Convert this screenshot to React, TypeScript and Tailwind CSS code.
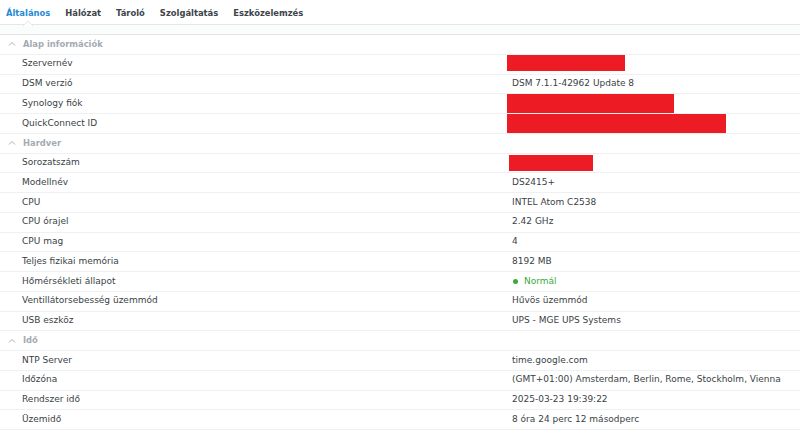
import React from 'react';

type Row = {
  label: string;
  value?: string;
  redact?: { w: number; h: number; ml: number; self: string };
  status?: boolean;
};

type Section = { title: string; rows: Row[] };

const sections: Section[] = [
  {
    title: 'Alap információk',
    rows: [
      { label: 'Szervernév', redact: { w: 118, h: 16, ml: -5, self: 'self-start' } },
      { label: 'DSM verzió', value: 'DSM 7.1.1-42962 Update 8' },
      { label: 'Synology fiók', redact: { w: 167, h: 19, ml: -5, self: 'self-start' } },
      { label: 'QuickConnect ID', redact: { w: 219, h: 19, ml: -5, self: 'self-start' } },
    ],
  },
  {
    title: 'Hardver',
    rows: [
      { label: 'Sorozatszám', redact: { w: 84, h: 16, ml: -3, self: 'self-center' } },
      { label: 'Modellnév', value: 'DS2415+' },
      { label: 'CPU', value: 'INTEL Atom C2538' },
      { label: 'CPU órajel', value: '2.42 GHz' },
      { label: 'CPU mag', value: '4' },
      { label: 'Teljes fizikai memória', value: '8192 MB' },
      { label: 'Hőmérsékleti állapot', value: 'Normál', status: true },
      { label: 'Ventillátorsebesség üzemmód', value: 'Hűvös üzemmód' },
      { label: 'USB eszköz', value: 'UPS - MGE UPS Systems' },
    ],
  },
  {
    title: 'Idő',
    rows: [
      { label: 'NTP Server', value: 'time.google.com' },
      { label: 'Időzóna', value: '(GMT+01:00) Amsterdam, Berlin, Rome, Stockholm, Vienna' },
      { label: 'Rendszer idő', value: '2025-03-23 19:39:22' },
      { label: 'Üzemidő', value: '8 óra 24 perc 12 másodperc' },
    ],
  },
];

const tabs = ['Általános', 'Hálózat', 'Tároló', 'Szolgáltatás', 'Eszközelemzés'];

function Chevron() {
  return (
    <svg width="8" height="6" viewBox="0 0 8 6" className="mr-[7px]">
      <path d="M1 4.5 L4 1.5 L7 4.5" fill="none" stroke="#a9afb5" strokeWidth="1" />
    </svg>
  );
}

export default function App() {
  return (
    <div
      className="w-[800px] h-[442px] bg-white overflow-hidden text-[#3a3f45]"
      style={{ fontFamily: '"DejaVu Sans", Verdana, sans-serif' }}
    >
      {/* Tabs */}
      <div className="relative h-[25px] flex items-center gap-[15px] pl-[6px] pt-[2px] border-b border-[#e3e5e8]">
        {tabs.map((t, i) => (
          <div
            key={t}
            className={`relative text-[8.4px] font-bold ${i === 0 ? 'text-[#1f8ad6]' : 'text-[#3c434a]'}`}
          >
            {t}
            {i === 0 && (
              <svg
                width="10"
                height="5"
                viewBox="0 0 10 5"
                className="absolute left-1/2 -translate-x-1/2 top-[14px]"
              >
                <path d="M0 5 L5 0 L10 5" fill="white" stroke="#e3e5e8" strokeWidth="1" />
              </svg>
            )}
          </div>
        ))}
      </div>
      <div className="h-[10px] bg-[#fbfcfc] border-b border-[#e3e5e8]" />

      {/* Sections */}
      <div>
        {sections.map((s) => (
          <div key={s.title}>
            <div className="h-[19.75px] flex items-center pl-[8px] border-b border-[#eef0f2] text-[8.4px] font-bold text-[#a5abb2]">
              <Chevron />
              {s.title}
            </div>
            {s.rows.map((r) => (
              <div
                key={r.label}
                className="h-[19.75px] grid grid-cols-[512px_1fr] border-b border-[#eef0f2] text-[9px]"
              >
                <div className="pl-[22px] flex items-center">{r.label}</div>
                <div className="flex items-center">
                  {r.redact ? (
                    <div
                      className={`bg-[#ed1c24] ${r.redact.self}`}
                      style={{ width: r.redact.w, height: r.redact.h, marginLeft: r.redact.ml }}
                    />
                  ) : r.status ? (
                    <span className="flex items-center text-[#3ca93c]">
                      <span className="w-[5px] h-[5px] rounded-full bg-[#3ca93c] mr-[6px] ml-[1px]" />
                      {r.value}
                    </span>
                  ) : (
                    r.value
                  )}
                </div>
              </div>
            ))}
          </div>
        ))}
      </div>
    </div>
  );
}
